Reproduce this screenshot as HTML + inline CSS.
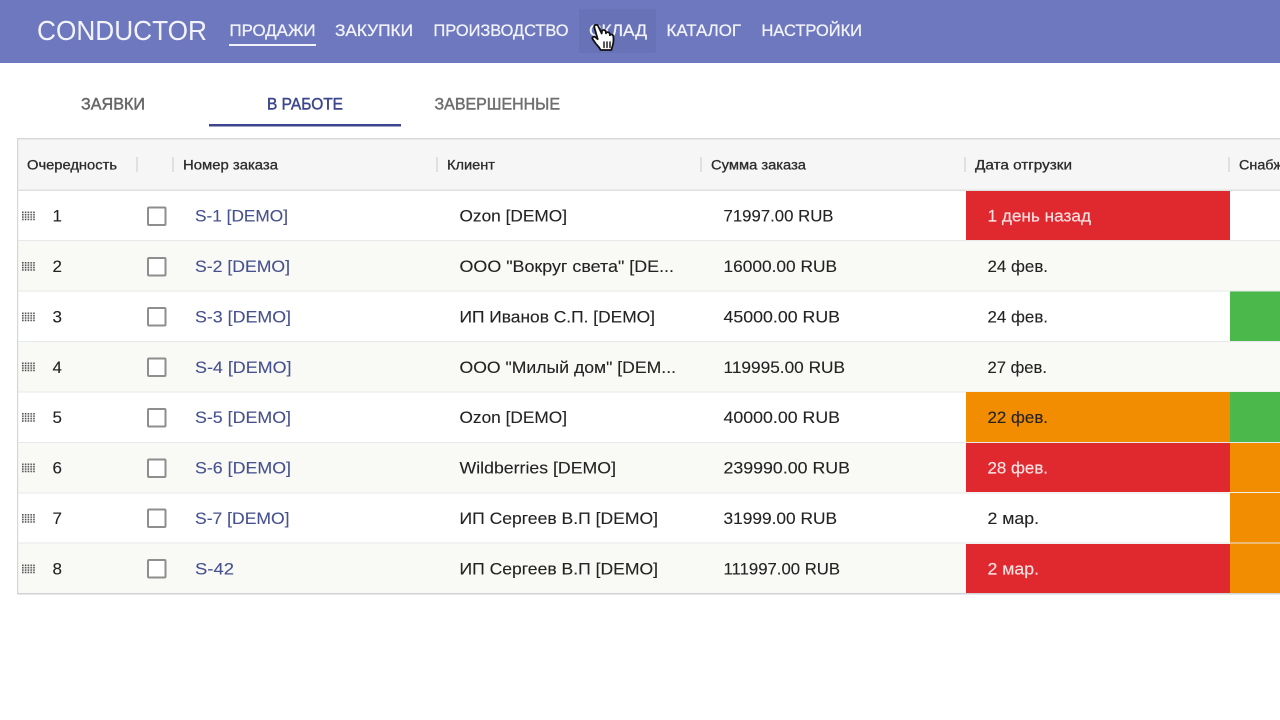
<!DOCTYPE html>
<html lang="ru"><head><meta charset="utf-8"><title>Conductor</title>
<style>
html,body{margin:0;padding:0;width:1280px;height:720px;overflow:hidden;background:#fff}
svg{display:block;filter:blur(.3px)}
text{font-family:"Liberation Sans",sans-serif;white-space:pre}
.n{font-size:17px;fill:#f2f3fa;stroke:#f2f3fa;stroke-width:.3}
.t{font-size:16.5px;stroke-width:.45}
.h{font-size:13.5px;fill:#2c2c2c;stroke:#2c2c2c;stroke-width:.3}
.c{font-size:17px;fill:#232323;stroke:#232323;stroke-width:.12}
.l{font-size:17px;fill:#47518f;stroke:#47518f;stroke-width:.12}
.w{font-size:17px;fill:#fbe3e3;stroke:#fbe3e3;stroke-width:.15}
.s{fill:#e0e0e0}
.b{fill:#fff;stroke:#8e8e8e;stroke-width:2}
</style></head><body>
<svg width="1280" height="720" viewBox="0 0 1280 720" xmlns="http://www.w3.org/2000/svg">
<defs>
<pattern id="d" width="2.8" height="2.4" patternUnits="userSpaceOnUse" x="22" y="0"><rect width="1.6" height="1.6" fill="#555"/></pattern>
<g id="g"><rect x="22" y="0" width="13" height="9" fill="url(#d)"/></g>
</defs>
<rect width="1280" height="720" fill="#fff"/>
<!-- top bar -->
<rect width="1280" height="63" fill="#6d78be"/>
<rect x="579" y="9" width="77" height="44" rx="2" fill="#6873b7"/>
<text x="37" y="40" font-size="28" fill="#f3f4fb" textLength="170" lengthAdjust="spacingAndGlyphs">CONDUCTOR</text>
<text class="n" x="229.5" y="36" textLength="86" lengthAdjust="spacingAndGlyphs">ПРОДАЖИ</text>
<rect x="229" y="44" width="87" height="2" fill="#f2f3fa"/>
<text class="n" x="335" y="36" textLength="78" lengthAdjust="spacingAndGlyphs">ЗАКУПКИ</text>
<text class="n" x="433.5" y="36" textLength="135" lengthAdjust="spacingAndGlyphs">ПРОИЗВОДСТВО</text>
<text class="n" x="589" y="36" textLength="58" lengthAdjust="spacingAndGlyphs">СКЛАД</text>
<text class="n" x="666.5" y="36" textLength="74.5" lengthAdjust="spacingAndGlyphs">КАТАЛОГ</text>
<text class="n" x="761.5" y="36" textLength="100.5" lengthAdjust="spacingAndGlyphs">НАСТРОЙКИ</text>
<!-- tabs -->
<text class="t" x="81" y="109.5" fill="#666" stroke="#666" textLength="64" lengthAdjust="spacingAndGlyphs">ЗАЯВКИ</text>
<text class="t" x="267" y="109.5" fill="#3d468c" stroke="#3d468c" textLength="76" lengthAdjust="spacingAndGlyphs">В РАБОТЕ</text>
<text class="t" x="434.5" y="109.5" fill="#6e6e6e" stroke="#6e6e6e" textLength="125.5" lengthAdjust="spacingAndGlyphs">ЗАВЕРШЕННЫЕ</text>
<rect x="209" y="124" width="192" height="2.5" fill="#3d468c"/>
<!-- table header -->
<rect x="17" y="138" width="1263" height="53" fill="#f6f6f6"/>
<rect x="17" y="138" width="1263" height="1.5" fill="#d9d9d9"/>
<rect x="17" y="189.5" width="1263" height="1.5" fill="#e0e0dc"/>
<rect class="s" x="136" y="157" width="2" height="15"/>
<rect class="s" x="172" y="157" width="2" height="15"/>
<rect class="s" x="436" y="157" width="2" height="15"/>
<rect class="s" x="700" y="157" width="2" height="15"/>
<rect class="s" x="964" y="157" width="2" height="15"/>
<rect class="s" x="1228" y="157" width="2" height="15"/>
<text class="h" x="27" y="169.5" textLength="90" lengthAdjust="spacingAndGlyphs">Очередность</text>
<text class="h" x="183" y="169.5" textLength="95" lengthAdjust="spacingAndGlyphs">Номер заказа</text>
<text class="h" x="447" y="169.5" textLength="48" lengthAdjust="spacingAndGlyphs">Клиент</text>
<text class="h" x="711" y="169.5" textLength="95" lengthAdjust="spacingAndGlyphs">Сумма заказа</text>
<text class="h" x="975" y="169.5" textLength="97" lengthAdjust="spacingAndGlyphs">Дата отгрузки</text>
<text class="h" x="1239" y="169.5" textLength="44" lengthAdjust="spacingAndGlyphs">Снабж</text>
<!-- row backgrounds -->
<rect x="18" y="241" width="1262" height="50" fill="#f9faf6"/>
<rect x="18" y="342" width="1262" height="50" fill="#f9faf6"/>
<rect x="18" y="443" width="1262" height="50" fill="#f9faf6"/>
<rect x="18" y="543.500" width="1262" height="50" fill="#f9faf6"/>
<rect x="18" y="240" width="1262" height="1" fill="#e6e9ea"/>
<rect x="18" y="290.500" width="1262" height="1" fill="#e6e9ea"/>
<rect x="18" y="341" width="1262" height="1" fill="#e6e9ea"/>
<rect x="18" y="391.500" width="1262" height="1" fill="#e6e9ea"/>
<rect x="18" y="442" width="1262" height="1" fill="#e6e9ea"/>
<rect x="18" y="492.500" width="1262" height="1" fill="#e6e9ea"/>
<rect x="18" y="542.500" width="1262" height="1" fill="#e6e9ea"/>
<!-- coloured cells -->
<rect x="966" y="191" width="264" height="49" fill="#e0282f"/>
<rect x="966" y="392" width="264" height="50" fill="#f28c00"/>
<rect x="966" y="443" width="264" height="49" fill="#e0282f"/>
<rect x="966" y="544" width="264" height="49" fill="#e0282f"/>
<rect x="1230" y="291.500" width="50" height="49.500" fill="#4ab84a"/>
<rect x="1230" y="392" width="50" height="50" fill="#4ab84a"/>
<rect x="1230" y="443" width="50" height="49" fill="#f28c00"/>
<rect x="1230" y="493" width="50" height="49.500" fill="#f28c00"/>
<rect x="1230" y="543.500" width="50" height="49.500" fill="#f28c00"/>
<!-- table frame -->
<rect x="17" y="138" width="1.200" height="456" fill="#d3d6da"/>
<rect x="17" y="593" width="1263" height="1.500" fill="#cfd2d6"/>
<!-- handles -->
<use href="#g" y="211.500"/><use href="#g" y="262"/><use href="#g" y="312.500"/><use href="#g" y="362.500"/>
<use href="#g" y="413"/><use href="#g" y="463.500"/><use href="#g" y="514"/><use href="#g" y="564.500"/>
<!-- checkboxes -->
<rect class="b" x="148" y="207.500" width="17.500" height="17.500" rx="1"/>
<rect class="b" x="148" y="258" width="17.500" height="17.500" rx="1"/>
<rect class="b" x="148" y="308" width="17.500" height="17.500" rx="1"/>
<rect class="b" x="148" y="358.500" width="17.500" height="17.500" rx="1"/>
<rect class="b" x="148" y="409" width="17.500" height="17.500" rx="1"/>
<rect class="b" x="148" y="459.500" width="17.500" height="17.500" rx="1"/>
<rect class="b" x="148" y="509.500" width="17.500" height="17.500" rx="1"/>
<rect class="b" x="148" y="560" width="17.500" height="17.500" rx="1"/>
<!-- row 1 -->
<text class="c" x="52.500" y="221.700">1</text>
<text class="l" x="195" y="221.700" textLength="93" lengthAdjust="spacingAndGlyphs">S-1 [DEMO]</text>
<text class="c" x="459.500" y="221.700" textLength="107.500" lengthAdjust="spacingAndGlyphs">Ozon [DEMO]</text>
<text class="c" x="723.500" y="221.700" textLength="110" lengthAdjust="spacingAndGlyphs">71997.00 RUB</text>
<text class="w" x="987.500" y="221.700" textLength="103.500" lengthAdjust="spacingAndGlyphs">1 день назад</text>
<!-- row 2 -->
<text class="c" x="52.500" y="272.200">2</text>
<text class="l" x="195" y="272.200" textLength="95" lengthAdjust="spacingAndGlyphs">S-2 [DEMO]</text>
<text class="c" x="459.500" y="272.200" textLength="214.500" lengthAdjust="spacingAndGlyphs">ООО "Вокруг света" [DE...</text>
<text class="c" x="723.500" y="272.200" textLength="113.500" lengthAdjust="spacingAndGlyphs">16000.00 RUB</text>
<text class="c" x="987.500" y="272.200" textLength="60.500" lengthAdjust="spacingAndGlyphs">24 фев.</text>
<!-- row 3 -->
<text class="c" x="52.500" y="322.500">3</text>
<text class="l" x="195" y="322.500" textLength="96" lengthAdjust="spacingAndGlyphs">S-3 [DEMO]</text>
<text class="c" x="459.500" y="322.500" textLength="195.500" lengthAdjust="spacingAndGlyphs">ИП Иванов С.П. [DEMO]</text>
<text class="c" x="723.500" y="322.500" textLength="116.500" lengthAdjust="spacingAndGlyphs">45000.00 RUB</text>
<text class="c" x="987.500" y="322.500" textLength="60.500" lengthAdjust="spacingAndGlyphs">24 фев.</text>
<!-- row 4 -->
<text class="c" x="52.500" y="372.800">4</text>
<text class="l" x="195" y="372.800" textLength="96.500" lengthAdjust="spacingAndGlyphs">S-4 [DEMO]</text>
<text class="c" x="459.500" y="372.800" textLength="216.500" lengthAdjust="spacingAndGlyphs">ООО "Милый дом" [DEM...</text>
<text class="c" x="723.500" y="372.800" textLength="121.500" lengthAdjust="spacingAndGlyphs">119995.00 RUB</text>
<text class="c" x="987.500" y="372.800" textLength="59.500" lengthAdjust="spacingAndGlyphs">27 фев.</text>
<!-- row 5 -->
<text class="c" x="52.500" y="423.200">5</text>
<text class="l" x="195" y="423.200" textLength="96" lengthAdjust="spacingAndGlyphs">S-5 [DEMO]</text>
<text class="c" x="459.500" y="423.200" textLength="107.500" lengthAdjust="spacingAndGlyphs">Ozon [DEMO]</text>
<text class="c" x="723.500" y="423.200" textLength="116.500" lengthAdjust="spacingAndGlyphs">40000.00 RUB</text>
<text class="c" x="987.500" y="423.200" textLength="60.500" lengthAdjust="spacingAndGlyphs">22 фев.</text>
<!-- row 6 -->
<text class="c" x="52.500" y="473.700">6</text>
<text class="l" x="195" y="473.700" textLength="96" lengthAdjust="spacingAndGlyphs">S-6 [DEMO]</text>
<text class="c" x="459.500" y="473.700" textLength="156.500" lengthAdjust="spacingAndGlyphs">Wildberries [DEMO]</text>
<text class="c" x="723.500" y="473.700" textLength="126.500" lengthAdjust="spacingAndGlyphs">239990.00 RUB</text>
<text class="w" x="987.500" y="473.700" textLength="60.500" lengthAdjust="spacingAndGlyphs">28 фев.</text>
<!-- row 7 -->
<text class="c" x="52.500" y="524">7</text>
<text class="l" x="195" y="524" textLength="94.500" lengthAdjust="spacingAndGlyphs">S-7 [DEMO]</text>
<text class="c" x="459.500" y="524" textLength="198.500" lengthAdjust="spacingAndGlyphs">ИП Сергеев В.П [DEMO]</text>
<text class="c" x="723.500" y="524" textLength="113.500" lengthAdjust="spacingAndGlyphs">31999.00 RUB</text>
<text class="c" x="987.500" y="524" textLength="51.500" lengthAdjust="spacingAndGlyphs">2 мар.</text>
<!-- row 8 -->
<text class="c" x="52.500" y="574.500">8</text>
<text class="l" x="195" y="574.500" textLength="39" lengthAdjust="spacingAndGlyphs">S-42</text>
<text class="c" x="459.500" y="574.500" textLength="198.500" lengthAdjust="spacingAndGlyphs">ИП Сергеев В.П [DEMO]</text>
<text class="c" x="723.500" y="574.500" textLength="116.500" lengthAdjust="spacingAndGlyphs">111997.00 RUB</text>
<text class="w" x="987.500" y="574.500" textLength="51.500" lengthAdjust="spacingAndGlyphs">2 мар.</text>
<!-- cursor -->
<g stroke="#111" stroke-width="1.800" stroke-linejoin="round" stroke-linecap="round">
<path fill="#fff" d="M600.500 50c-.8-2.500-3-4.200-4.800-6.500l-3-4.300c-1-1.800 1-3.200 2.600-2l2.400 2-3.400-12c-.6-2.200 2.600-3.400 3.800-1.200l3.600 7.500.2-2c.3-2 3.400-2 3.800 0l.3 1.800c.5-1.700 3.300-1.500 3.700.4l.2 1.500c.9-1.300 3.100-.9 3.400 1.100.5 3.500.2 6.500-.7 9.500-.5 1.600-1 2.800-1.200 4.200z"/>
<path fill="none" stroke-width="1.400" d="M604 42v5.500M607 42v5.500M610 42v5.500"/>
</g>
</svg>
</body></html>
